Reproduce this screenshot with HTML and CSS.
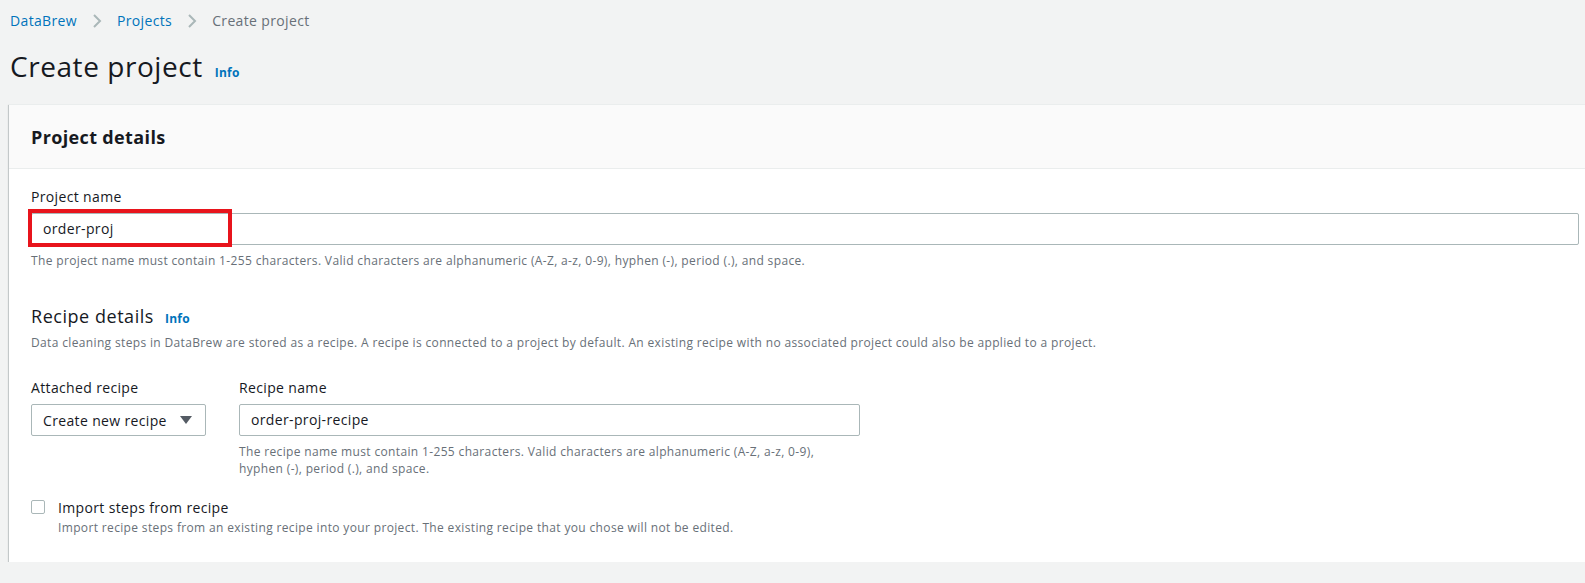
FILE: index.html
```html
<!DOCTYPE html>
<html lang="en">
<head>
<meta charset="utf-8">
<title>Create project</title>
<link rel="stylesheet" href="styles.css">
</head>
<body>
<div class="page">
  <nav class="crumbs">
    <a class="crumb-link" href="#">DataBrew</a>
    <svg class="chev" width="10" height="14" viewBox="0 0 10 14"><path d="M2 1l6 6-6 6" fill="none" stroke="#aab7b8" stroke-width="2"/></svg>
    <a class="crumb-link" href="#">Projects</a>
    <svg class="chev" width="10" height="14" viewBox="0 0 10 14"><path d="M2 1l6 6-6 6" fill="none" stroke="#aab7b8" stroke-width="2"/></svg>
    <span class="crumb-current">Create project</span>
  </nav>
  <div class="title-row">
    <h1 class="title">Create project</h1>
    <a class="info" href="#">Info</a>
  </div>
  <section class="card">
    <header class="card-head">
      <h2 class="card-title">Project details</h2>
    </header>
    <div class="card-body">
      <div class="field">
        <label class="label">Project name</label>
        <div class="input-wrap">
          <div class="input">order-proj</div>
          <div class="highlight"></div>
        </div>
        <p class="hint">The project name must contain 1-255 characters. Valid characters are alphanumeric (A-Z, a-z, 0-9), hyphen (-), period (.), and space.</p>
      </div>

      <div class="section-head">
        <h3 class="section-title">Recipe details</h3>
        <a class="info" href="#">Info</a>
      </div>
      <p class="section-desc">Data cleaning steps in DataBrew are stored as a recipe. A recipe is connected to a project by default. An existing recipe with no associated project could also be applied to a project.</p>

      <div class="recipe-row">
        <div class="field-col">
          <label class="label">Attached recipe</label>
          <div class="select">
            <span>Create new recipe</span>
            <svg class="caret" width="12" height="8" viewBox="0 0 12 8"><path d="M0 0h12L6 8z" fill="#545b64"/></svg>
          </div>
        </div>
        <div class="field-col name-col">
          <label class="label">Recipe name</label>
          <div class="input">order-proj-recipe</div>
          <p class="hint">The recipe name must contain 1-255 characters. Valid characters are alphanumeric (A-Z, a-z, 0-9), hyphen (-), period (.), and space.</p>
        </div>
      </div>

      <div class="check-row">
        <span class="checkbox"></span>
        <div class="check-text">
          <div class="check-label">Import steps from recipe</div>
          <div class="check-desc">Import recipe steps from an existing recipe into your project. The existing recipe that you chose will not be edited.</div>
        </div>
      </div>
    </div>
  </section>
</div>
</body>
</html>
```
FILE: styles.css
```css
html, body {
  margin: 0;
  padding: 0;
}
body {
  background: #f2f3f3;
  font-family: "Open Sans", "Noto Sans", sans-serif;
  letter-spacing: 0.022em;
  color: #16191f;
  overflow: hidden;
}
.page {
  padding: 10px 0 0 10px;
  margin-right: -16px;
}
.crumbs {
  display: flex;
  align-items: center;
  gap: 15px;
  font-size: 14px;
  line-height: 22px;
  height: 22px;
}
.crumb-link {
  color: #0073bb;
  text-decoration: none;
}
.crumb-current {
  color: #687078;
}
.chev {
  display: block;
}
.title-row {
  display: flex;
  align-items: baseline;
  gap: 12px;
  margin-top: 16px;
}
.title {
  margin: 0;
  font-size: 28px;
  font-weight: 400;
  letter-spacing: 0.02em;
  line-height: 36px;
}
.info {
  color: #0073bb;
  font-size: 12px;
  font-weight: 700;
  letter-spacing: 0.02em;
  text-decoration: none;
}
.card {
  margin: 20px 0 0 -1px;
  background: #fff;
  border-top: 1px solid #eaeded;
  box-shadow: 0 1px 1px 0 rgba(0, 28, 36, 0.3), 1px 1px 1px 0 rgba(0, 28, 36, 0.15), -1px 1px 1px 0 rgba(0, 28, 36, 0.15);
}
.card-head {
  background: #fafafa;
  border-bottom: 1px solid #eaeded;
  height: 63px;
  display: flex;
  align-items: center;
  padding: 0 22px;
}
.card-title {
  margin: 0;
  font-size: 18px;
  font-weight: 700;
  letter-spacing: 0.02em;
  line-height: 24px;
}
.card-body {
  padding: 17px 22px 26px 22px;
}
.label {
  display: block;
  font-size: 14px;
  line-height: 22px;
  margin-bottom: 5px;
}
.input-wrap {
  position: relative;
}
.input {
  box-sizing: border-box;
  height: 32px;
  border: 1px solid #aab7b8;
  border-radius: 2px;
  background: #fff;
  font-size: 14px;
  line-height: 30px;
  padding: 0 11px;
}
.highlight {
  position: absolute;
  left: -3px;
  top: -4px;
  width: 204px;
  height: 38px;
  box-sizing: border-box;
  border: 4px solid #e8141c;
}
.hint {
  margin: 7px 0 0;
  font-size: 12px;
  line-height: 17px;
  color: #687078;
}
.section-head {
  display: flex;
  align-items: baseline;
  gap: 11px;
  margin-top: 35px;
}
.section-title {
  margin: 0;
  font-size: 18px;
  font-weight: 400;
  letter-spacing: 0.03em;
  line-height: 24px;
}
.section-desc {
  margin: 6px 0 0;
  font-size: 12px;
  line-height: 17px;
  color: #687078;
}
.recipe-row {
  display: flex;
  gap: 33px;
  margin-top: 26px;
}
.select {
  box-sizing: border-box;
  width: 175px;
  height: 32px;
  border: 1px solid #aab7b8;
  border-radius: 2px;
  display: flex;
  align-items: center;
  justify-content: space-between;
  padding: 0 13px 0 11px;
  font-size: 14px;
}
.caret {
  display: block;
}
.name-col {
  width: 621px;
}
.check-row {
  display: flex;
  gap: 13px;
  margin-top: 20px;
}
.checkbox {
  box-sizing: border-box;
  width: 14px;
  height: 14px;
  border: 1px solid #aab7b8;
  border-radius: 2px;
  margin-top: 3px;
  flex: none;
}
.check-label {
  font-size: 14px;
  line-height: 22px;
}
.check-desc {
  font-size: 12px;
  line-height: 17px;
  color: #687078;
}
```
